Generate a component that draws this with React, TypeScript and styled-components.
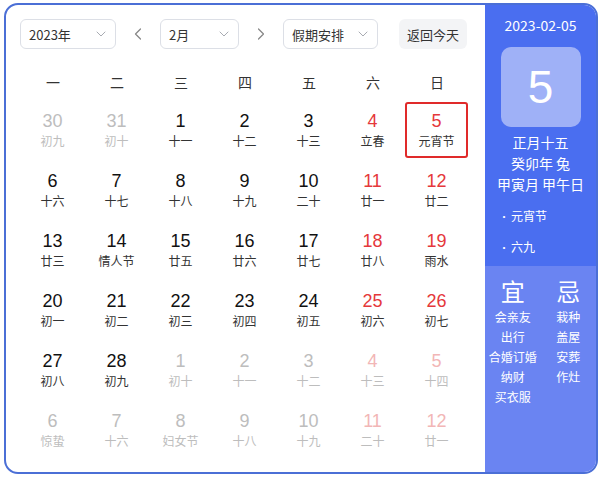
import React from 'react';
import styled, { createGlobalStyle } from 'styled-components';
import { ChevronDown, ChevronLeft, ChevronRight } from 'lucide-react';

const GlobalStyle = createGlobalStyle`
  body {
    margin: 0;
    background: #fff;
    font-family: 'Microsoft YaHei', 'Noto Sans CJK SC', 'Noto Sans', sans-serif;
  }
`;

type Day = { d: number; l: string; other?: boolean; weekend?: boolean; selected?: boolean };

const raw: [number, string, boolean?][] = [
  [30, '初九', true], [31, '初十', true], [1, '十一'], [2, '十二'], [3, '十三'], [4, '立春'], [5, '元宵节'],
  [6, '十六'], [7, '十七'], [8, '十八'], [9, '十九'], [10, '二十'], [11, '廿一'], [12, '廿二'],
  [13, '廿三'], [14, '情人节'], [15, '廿五'], [16, '廿六'], [17, '廿七'], [18, '廿八'], [19, '雨水'],
  [20, '初一'], [21, '初二'], [22, '初三'], [23, '初四'], [24, '初五'], [25, '初六'], [26, '初七'],
  [27, '初八'], [28, '初九'], [1, '初十', true], [2, '十一', true], [3, '十二', true], [4, '十三', true], [5, '十四', true],
  [6, '惊蛰', true], [7, '十六', true], [8, '妇女节', true], [9, '十八', true], [10, '十九', true], [11, '二十', true], [12, '廿一', true],
];

const days: Day[] = raw.map(([d, l, other], i) => ({
  d,
  l,
  other: !!other,
  weekend: i % 7 >= 5,
  selected: i === 6,
}));

const weekNames = ['一', '二', '三', '四', '五', '六', '日'];

function App() {
  return (
    <>
      <GlobalStyle />
      <Frame>
        <Main>
          <Toolbar>
            <Select width={96}>
              <span>2023年</span>
              <ChevronDown size={16} color="#a8abb2" strokeWidth={1.5} />
            </Select>
            <Arrow>
              <ChevronLeft size={20} strokeWidth={1.5} />
            </Arrow>
            <Select width={79}>
              <span>2月</span>
              <ChevronDown size={16} color="#a8abb2" strokeWidth={1.5} />
            </Select>
            <Arrow>
              <ChevronRight size={20} strokeWidth={1.5} />
            </Arrow>
            <Select width={95}>
              <span>假期安排</span>
              <ChevronDown size={16} color="#a8abb2" strokeWidth={1.5} />
            </Select>
            <TodayButton>返回今天</TodayButton>
          </Toolbar>
          <WeekRow>
            {weekNames.map(w => (
              <div key={w}>{w}</div>
            ))}
          </WeekRow>
          <Grid>
            {days.map((day, i) => (
              <Cell key={i} $selected={day.selected}>
                <Num $other={day.other} $weekend={day.weekend}>{day.d}</Num>
                <Lunar $other={day.other}>{day.l}</Lunar>
              </Cell>
            ))}
          </Grid>
        </Main>
        <Side>
          <SideTop>
            <DateText>2023-02-05</DateText>
            <BigDay>5</BigDay>
            <LunarInfo>
              <div>正月十五</div>
              <div>癸卯年 兔</div>
              <div>甲寅月 甲午日</div>
            </LunarInfo>
            <Festivals>
              <li>元宵节</li>
              <li>六九</li>
            </Festivals>
          </SideTop>
          <SideBottom>
            <Col>
              <Big>宜</Big>
              <div>会亲友</div>
              <div>出行</div>
              <div>合婚订婚</div>
              <div>纳财</div>
              <div>买衣服</div>
            </Col>
            <Col>
              <Big>忌</Big>
              <div>栽种</div>
              <div>盖屋</div>
              <div>安葬</div>
              <div>作灶</div>
            </Col>
          </SideBottom>
        </Side>
      </Frame>
    </>
  );
}

export default App;

const Frame = styled.div`
  margin: 3px 0 0 4px;
  width: 594px;
  height: 471px;
  box-sizing: border-box;
  border: 2px solid #4b6fd6;
  border-radius: 14px;
  overflow: hidden;
  display: flex;
  background: #fff;
`;

const Main = styled.div`
  flex: 1;
  padding: 14px 0 0 14px;
`;

const Toolbar = styled.div`
  display: flex;
  align-items: center;
  height: 30px;
`;

const Select = styled.div<{ width: number }>`
  width: ${p => p.width}px;
  height: 30px;
  box-sizing: border-box;
  border: 1px solid #dcdfe6;
  border-radius: 6px;
  display: flex;
  align-items: center;
  justify-content: space-between;
  padding: 0 6px 0 8px;
  font-size: 13px;
  color: #333;
`;

const Arrow = styled.div`
  width: 44px;
  display: flex;
  justify-content: center;
  color: #888;
`;

const TodayButton = styled.div`
  margin-left: 21px;
  height: 30px;
  padding: 0 8px;
  display: flex;
  align-items: center;
  background: #f3f4f6;
  border-radius: 6px;
  font-size: 13px;
  color: #333;
`;

const WeekRow = styled.div`
  display: grid;
  grid-template-columns: repeat(7, 64px);
  margin: 14px 0 0 1px;
  height: 38px;
  align-items: center;
  text-align: center;
  font-size: 14px;
  color: #333;
`;

const Grid = styled.div`
  display: grid;
  grid-template-columns: repeat(7, 64px);
  grid-auto-rows: 56px;
  row-gap: 4px;
  margin: 1px 0 0 1px;
`;

const Cell = styled.div<{ $selected?: boolean }>`
  width: 63px;
  box-sizing: border-box;
  display: flex;
  flex-direction: column;
  align-items: center;
  justify-content: center;
  border: 2px solid ${p => (p.$selected ? '#e02a2a' : 'transparent')};
  border-radius: 3px;
`;

const Num = styled.div<{ $other?: boolean; $weekend?: boolean }>`
  font-family: 'Liberation Sans', Arial, sans-serif;
  font-size: 18px;
  line-height: 22px;
  color: ${p =>
    p.$weekend ? (p.$other ? '#f2b6b6' : '#e5383b') : p.$other ? '#bdbdbd' : '#111'};
`;

const Lunar = styled.div<{ $other?: boolean }>`
  font-size: 12px;
  line-height: 18px;
  color: ${p => (p.$other ? '#bdbdbd' : '#333')};
`;

const Side = styled.div`
  width: 111px;
  display: flex;
  flex-direction: column;
  color: #fff;
`;

const SideTop = styled.div`
  height: 261px;
  background: #4a6ef0;
  display: flex;
  flex-direction: column;
  align-items: center;
`;

const DateText = styled.div`
  margin-top: 10px;
  font-size: 14px;
  line-height: 20px;
`;

const BigDay = styled.div`
  margin-top: 12px;
  width: 80px;
  height: 80px;
  border-radius: 10px;
  background: #9fb1f7;
  display: flex;
  align-items: center;
  justify-content: center;
  font-family: 'Liberation Sans', Arial, sans-serif;
  font-size: 46px;
`;

const LunarInfo = styled.div`
  margin-top: 5px;
  font-size: 14px;
  line-height: 21px;
  text-align: center;
`;

const Festivals = styled.ul`
  align-self: stretch;
  list-style: none;
  margin: 6px 0 0;
  padding: 0 0 0 14px;
  font-size: 12px;
  line-height: 30px;

  li::before {
    content: '•';
    font-size: 10px;
    margin-right: 2px;
  }
`;

const SideBottom = styled.div`
  flex: 1;
  background: #6a84f2;
  display: grid;
  grid-template-columns: 1fr 1fr;
  padding-top: 10px;
`;

const Col = styled.div`
  display: flex;
  flex-direction: column;
  align-items: center;
  font-size: 12px;
  line-height: 20px;
`;

const Big = styled.div`
  font-size: 24px;
  line-height: 30px;
  margin-bottom: 1px;
`;
